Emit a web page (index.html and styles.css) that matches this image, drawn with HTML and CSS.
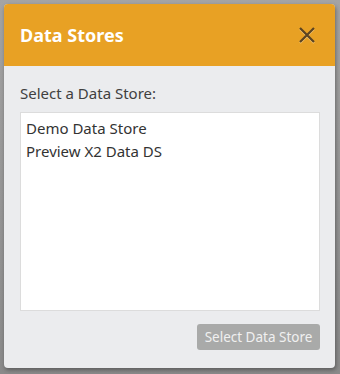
FILE: index.html
```html
<!DOCTYPE html>
<html>
<head>
<meta charset="utf-8">
<link rel="stylesheet" href="styles.css">
</head>
<body>
<div class="dialog">
  <div class="header">
    <span class="title">Data Stores</span>
    <svg class="close" width="18" height="18" viewBox="0 0 18 18"><path d="M2 2 L16 16 M16 2 L2 16" stroke="#5b4422" stroke-width="2.2" fill="none"/></svg>
  </div>
  <div class="content">
    <div class="label">Select a Data Store:</div>
    <div class="list">
      <div class="item">Demo Data Store</div>
      <div class="item">Preview X2 Data DS</div>
    </div>
    <div class="actions">
      <button class="btn">Select Data Store</button>
    </div>
  </div>
</div>
</body>
</html>
```
FILE: styles.css
```css
html, body { margin: 0; padding: 0; }
body {
  width: 340px; height: 374px;
  background: linear-gradient(#a4a4a4, #8a8a8a);
  font-family: "Noto Sans", "Open Sans", sans-serif;
  padding: 4px 0 0 4px;
  box-sizing: border-box;
}
.dialog {
  width: 331px; height: 364px;
  border-radius: 4px;
  overflow: hidden;
  background: #ebecee;
  box-shadow: 1px 2px 4px rgba(0,0,0,0.35);
  display: flex; flex-direction: column;
}
.header {
  height: 62px;
  background: #e8a124;
  display: flex; align-items: center; justify-content: space-between;
  padding: 0 19px 0 16px;
  box-sizing: border-box;
}
.title { color: #fff; font-weight: bold; font-size: 18px; }
.close { filter: drop-shadow(0 1px 0 rgba(255,230,180,0.5)); }
.content { padding: 17px 15px 0 16px; display: flex; flex-direction: column; }
.label { color: #404040; font-size: 15px; line-height: 21px; height: 29px; }
.list {
  height: 199px; box-sizing: border-box;
  background: #fff; border: 1px solid #dcdcdc;
  padding: 4px 5px;
}
.item { color: #333; font-size: 15px; line-height: 23px; }
.actions { display: flex; justify-content: flex-end; padding-top: 13px; }
.btn {
  width: 123px; height: 26px;
  border: none; border-radius: 3px;
  background: #a9aaa9; color: #f0f0f0;
  font-family: inherit; font-size: 13.5px; padding: 0;
}
```
